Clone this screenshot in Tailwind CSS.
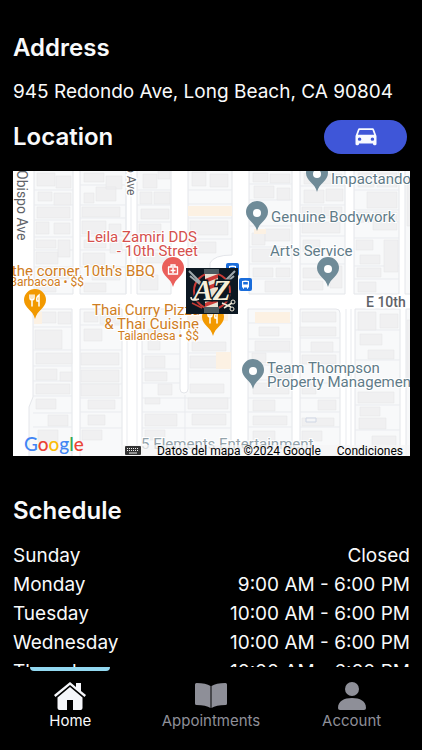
<!DOCTYPE html>
<html lang="en">
<head>
  <meta charset="UTF-8">
  <meta name="viewport" content="width=device-width, initial-scale=1">
  <title>Shop info</title>
  <script src="https://cdn.jsdelivr.net/npm/@tailwindcss/browser@4"></script>
</head>
<body class="bg-black text-gray-50 font-['Inter',sans-serif] h-screen flex flex-col">

  <main class="flex-1 min-h-0 overflow-y-auto [scrollbar-width:none] pl-[13px] pr-3 pt-8">
    <!-- Address -->
    <h2 class="text-2xl leading-8 font-semibold">Address</h2>
    <p class="mt-3 text-[19px] leading-8 whitespace-nowrap">945 Redondo Ave, Long Beach, CA 90804</p>

    <!-- Location -->
    <div class="mt-3 flex items-center justify-between pr-[3px]">
      <h2 class="text-2xl leading-8 font-semibold">Location</h2>
      <button type="button" aria-label="Directions" class="w-[83px] h-[34px] rounded-full bg-[#3f56d8] flex items-center justify-center">
        <svg class="w-7 h-[26px]" viewBox="0 0 24 24" preserveAspectRatio="none" fill="#f8faff"><path d="M18.920 5C18.720 4.400 18.160 4 17.500 4h-11c-.66 0-1.210.4-1.420 1L3 11v7.500c0 .55.45 1 1 1h1c.55 0 1-.45 1-1V18h12v.5c0 .55.45 1 1 1h1c.55 0 1-.45 1-1V11l-2.080-6zM6.500 15.500a1.500 1.500 0 1 1 0-3 1.500 1.500 0 0 1 0 3zm11 0a1.500 1.500 0 1 1 0-3 1.500 1.500 0 0 1 0 3zM5 10l1.500-4.500h11L19 10H5z"/></svg>
      </button>
    </div>

    <!-- Map -->
    <div class="relative mt-[17px] h-[285px] overflow-hidden bg-white">
      <svg class="w-full h-full" viewBox="13 171 397 285" preserveAspectRatio="xMidYMid slice" font-family="Roboto, sans-serif">
        <defs>
          <path id="pin" d="M0 0C-2-9-11-11-11-19A11 11 0 0 1 11-19C11-11 2-9 0 0Z"/>
          <g id="fork" fill="none" stroke="#fff" stroke-width="1.500" stroke-linecap="round">
            <path d="M-5-5v3q0 2 2 2t2-2v-3M-3-5V6M4 6V-5q-3 2-2 6h2"/>
          </g>
          <g id="bus">
            <rect width="13" height="13" rx="2" fill="#1a6ddb"/>
            <path d="M3 3q3.500-1 7 0v6.500h-1v1.200H8V9.500H5v1.200H4V9.500H3z" fill="#fff"/>
            <path d="M4.200 4h4.600v2.500H4.200z" fill="#1a6ddb"/>
          </g>
        </defs>
        <rect x="13" y="171" width="397" height="285" fill="#fff"/>

        <!-- blocks -->
        <path fill="#f8f9fa" stroke="#e4e6ea" d="M34 165h39v129H34zM80 165h46v129H80zM137 165h34v129h-34zM188 165h44v90q-18 0-22 8v31h-22zM249 165h43v129h-43zM300 165h45v129h-45zM354 165h45v129h-45zM405 165h10v129h-10z
          M33 309h39v160H29v-62l4-10zM80 309h42v160H80zM142 309h38v80q0 4 4 4t4-4v-80h43v160h-89zM248 309h44v160h-44zM300 309h36q4 0 4 4v156h-40zM355 309h45v160h-45zM406 309h10v160h-10z"/>
        <path fill="none" stroke="#e9ebef" d="M34 190h39M34 205h39M34 220h39M34 237h39M34 250h39M34 267h39M80 185h46M80 205h46M80 218h46M80 236h46M80 250h46M80 267h46M137 190h34M137 205h34M137 222h34M137 250h34M188 190h44M188 204h44M188 218h44M188 239h44
          M249 184h43M249 200h43M249 226h43M249 247h43M249 264h43M249 279h43M300 186h45M300 205h45M300 218h45M300 236h45M300 264h45M354 190h45M354 210h45M354 222h45M354 238h45M354 266h45M354 279h45
          M33 327h39M33 350h39M33 366h39M33 381h39M33 396h39M33 413h39M33 427h39M80 325h42M80 350h42M80 368h42M80 384h42M80 398h42M80 412h42M80 428h42M142 354h38M142 369h38M142 383h38M142 398h89M142 412h89M142 428h89M188 353h43M188 371h43
          M248 323h44M248 339h44M248 352h44M248 365h44M248 380h44M248 398h44M248 412h44M248 427h44M300 338h40M300 352h40M300 383h40M300 398h40M300 412h40M300 427h40M355 330h45M355 360h45M355 384h45M355 405h45M355 430h45M185 395v61M126 165v129M131 165v129M127 309v147M137 309v147M346 309v147M351 309v147"/>

        <!-- buildings -->
        <path fill="#f0f0f1" stroke="#e8e8ea" stroke-width=".6" d="M37 173h18v13H37zM56 176h15v12H56zM38 192h14v9H38zM54 193h17v12H54zM37 207h33v11H37zM36 222h13v12H36zM54 223h16v11H54zM36 240h20v8H36zM58 240h12v17H58zM36 252h22v12H36zM41 270h28v9H41zM36 283h20v9H36z
          M84 173h20v9H84zM106 176h16v13h-16zM96 187h20v14H96zM84 193h10v10H84zM82 207h38v10H82zM82 221h24v13H82zM109 224h12v11h-12zM84 240h22v8H84zM110 240h12v13h-12zM83 253h22v12H83zM92 270h28v10H92zM84 283h22v9H84z
          M143 174h14v14h-14zM158 171h12v8h-12zM140 192h12v12h-12zM154 192h16v12h-16zM141 209h28v10h-28zM139 224h22v11h-22zM140 253h27v10h-27zM140 275h18v15h-18z
          M192 172h14v14h-14zM210 174h18v13h-18zM190 221h38v14h-38zM192 242h24v11h-24zM253 173h15v9h-15zM270 174h20v9h-20zM254 186h20v12h-20zM277 188h13v12h-13zM265 229h25v12h-25zM252 233h13v12h-13zM252 249h28v13h-28zM253 268h20v9h-20zM276 268h14v9h-14zM265 281h26v11h-26z
          M304 173h14v11h-14zM322 174h20v10h-20zM304 190h20v13h-20zM326 189h17v12h-17zM302 207h20v9h-20zM324 207h18v9h-18zM302 222h38v11h-38zM303 240h17v12h-17zM303 268h24v10h-24zM330 266h12v22h-12zM303 281h20v9h-20z
          M358 173h16v14h-16zM377 173h20v14h-20zM367 192h30v16h-30zM358 212h12v10h-12zM373 212h24v18h-24zM356 240h17v10h-17zM384 240h14v32h-14zM360 255h20v9h-20zM357 268h24v9h-24zM358 282h18v10h-18z
          M40 312h16v11H40zM58 312h13v12H58zM35 330h27v19H35zM36 353h36v11H36zM36 369h21v11H36zM60 372h12v9H60zM36 384h34v10H36zM36 399h20v10H36zM48 415h20v11H48zM38 430h20v12H38z
          M84 312h14v10H84zM100 314h20v10h-20zM84 329h18v12H84zM81 353h38v12H81zM81 370h38v12H81zM81 384h38v12H81zM88 400h27v9H88zM88 415h17v10H88zM82 430h20v10H82z
          M148 329h12v21h-12zM145 356h20v12h-20zM145 372h22v9h-22zM158 384h14v11h-14zM145 398h15v6h-15zM145 414h32v12h-32zM145 430h20v10h-20zM192 342h34v9h-34zM190 356h40v12h-40zM190 384h34v9h-34zM188 398h40v11h-40zM192 414h34v11h-34z
          M259 327h20v9h-20zM255 341h35v10h-35zM252 353h14v10h-14zM270 368h20v10h-20zM253 383h36v11h-36zM253 400h22v11h-22zM253 416h34v9h-34zM253 431h22v10h-22zM302 312h34v10h-34zM300 327h36v9h-36zM311 342h22v10h-22zM302 355h34v9h-34zM302 384h14v10h-14zM318 400h18v10h-18zM302 418h32v8h-32zM302 431h20v10h-20z
          M358 312h18v18h-18zM380 314h18v14h-18zM360 334h22v11h-22zM368 350h26v9h-26zM358 392h36v11h-36zM360 407h20v9h-20zM359 418h27v11h-27zM372 436h24v11h-24zM407 176h6v50h-6zM407 320h6v60h-6z"/>
        <path fill="#fcf1e3" d="M188 206h44v10h-44zM254 229h12v5h-12zM255 312h35v11h-35zM34 312h8v12h-8zM216 352h15v17h-15zM188 313h40v8h-40z"/>
        <path fill="#f4f5f7" stroke="#cfd6e4" d="M306 418h10v4h-10z"/>

        <!-- street names -->
        <g fill="#5f6368" stroke="#fff" stroke-width="3" paint-order="stroke">
          <text transform="translate(17 170) rotate(90)" font-size="14">Obispo Ave</text>
          <text transform="translate(127 166) rotate(90)" font-size="12">o Ave</text>
          <text x="366" y="307" font-size="14" font-weight="500">E 10th</text>
        </g>

        <!-- place labels -->
        <g stroke="#fff" stroke-width="2" paint-order="stroke" font-size="15">
          <g fill="#5f7b88">
            <text x="331" y="184">Impactando</text>
            <text x="271" y="222">Genuine Bodywork</text>
            <text x="270" y="256">Art's Service</text>
            <text x="267" y="373">Team Thompson</text>
            <text x="267" y="387">Property Management</text>
            <text x="141" y="449" fill="#93a3ab">5 Elements Entertainment</text>
          </g>
          <g fill="#d5504d" text-anchor="end">
            <text x="197" y="242">Leila Zamiri DDS</text>
            <text x="198" y="256">- 10th Street</text>
          </g>
          <g fill="#cf7d23">
            <text x="155" y="276" text-anchor="end">the corner 10th's BBQ</text>
            <text x="84" y="286" text-anchor="end" font-size="12">Barbacoa • $$</text>
            <text x="92" y="315">Thai Curry Pizza</text>
            <text x="199" y="329" text-anchor="end">&amp; Thai Cuisine</text>
            <text x="199" y="340" text-anchor="end" font-size="12">Tailandesa • $$</text>
          </g>
        </g>

        <!-- pins -->
        <g fill="#6f8b98">
          <use href="#pin" x="317" y="192"/>
          <use href="#pin" x="257" y="231"/>
          <use href="#pin" x="328" y="287"/>
          <use href="#pin" x="253" y="389"/>
        </g>
        <g fill="#fff">
          <circle cx="317" cy="174" r="4"/>
          <circle cx="257" cy="213" r="4"/>
          <circle cx="328" cy="269" r="4"/>
          <circle cx="253" cy="371" r="4"/>
        </g>
        <use href="#pin" x="173" y="287" fill="#ea5f5b"/>
        <path d="M168 267h10M168.500 267v7h9v-7M171 267v-2h4v2" fill="none" stroke="#fff" stroke-width="1.300"/>
        <path d="M173 268v5M170.500 270.500h5" stroke="#fff" stroke-width="1.500"/>
        <use href="#pin" x="35" y="319" fill="#f29900"/>
        <use href="#fork" x="35" y="300"/>
        <use href="#pin" x="213" y="336" fill="#f29900"/>
        <use href="#fork" x="213" y="317"/>
        <use href="#bus" x="226" y="263"/>
        <use href="#bus" x="239" y="278"/>

        <!-- shop logo -->
        <rect x="186" y="268" width="52" height="46" fill="#0c1822"/>
        <circle cx="212" cy="291" r="18" fill="none" stroke="#c73a35" stroke-width="2"/>
        <path d="M189 271l14 14M190 276l11 9M235 271l-14 14M234 276l-11 9" stroke="#9fa9ad" stroke-width="2"/>
        <rect x="205" y="272" width="13" height="37" fill="#e9e2d3"/>
        <path d="M205 279l13-5v4l-13 5zM205 287l13-5v4l-13 5zM205 303l13-5v4l-13 5z" fill="#cc3b38"/>
        <path d="M204 269h15v5h-15zM204 307h15v6h-15z" fill="#4d5a60"/>
        <text x="212" y="300" text-anchor="middle" font-family="'Liberation Serif', serif" font-size="29" font-weight="700" font-style="italic" fill="#f6efd9" stroke="#0c1822" stroke-width="3" paint-order="stroke">AZ</text>
        <path d="M191 297q0 5 8 2M222 303l9 4M224 308l8-5" fill="none" stroke="#f0ead8" stroke-width="1.500"/>
        <path d="M192 303l10 5" stroke="#c73a35" stroke-width="1.500"/>
        <circle cx="232" cy="309" r="2" fill="none" stroke="#f0ead8"/>
        <circle cx="233" cy="302" r="2" fill="none" stroke="#f0ead8"/>
      </svg>

      <!-- Attribution over the map -->
      <div class="absolute inset-x-0 bottom-0 flex items-end justify-between pl-[11px] text-black">
        <div class="font-['Lato',sans-serif] font-medium text-[19px] leading-6" aria-label="Google"><span class="text-[#4285f4]">G</span><span class="text-[#ea4335]">o</span><span class="text-[#fbbc05]">o</span><span class="text-[#4285f4]">g</span><span class="text-[#34a853]">l</span><span class="text-[#ea4335]">e</span></div>
        <div class="flex items-center h-[11px] pl-1 pr-[7px] bg-[#f5f5f5]/70 font-['Roboto',sans-serif] text-[12px] leading-3 whitespace-nowrap">
          <svg class="w-4 h-2.5 mr-4" viewBox="0 0 16 10"><rect width="16" height="9" rx="1" fill="#333"/><path d="M2 2.500h12M2 4.500h12" stroke="#eee" stroke-dasharray="1 1"/><path d="M4 7h8" stroke="#eee"/></svg>
          <span>Datos del mapa ©2024 Google</span>
          <a href="#" class="ml-4">Condiciones</a>
        </div>
      </div>
    </div>

    <!-- Schedule -->
    <h2 class="mt-[39px] text-2xl leading-8 font-semibold">Schedule</h2>
    <table class="mt-[14px] w-full text-[19px] leading-[29px]">
      <tbody>
        <tr><th scope="row" class="p-0 text-left font-normal">Sunday</th><td class="p-0 text-right">Closed</td></tr>
        <tr><th scope="row" class="p-0 text-left font-normal">Monday</th><td class="p-0 text-right">9:00 AM - 6:00 PM</td></tr>
        <tr><th scope="row" class="p-0 text-left font-normal">Tuesday</th><td class="p-0 text-right">10:00 AM - 6:00 PM</td></tr>
        <tr><th scope="row" class="p-0 text-left font-normal">Wednesday</th><td class="p-0 text-right">10:00 AM - 6:00 PM</td></tr>
        <tr><th scope="row" class="p-0 text-left font-normal">Thursday</th><td class="p-0 text-right">10:00 AM - 6:00 PM</td></tr>
      </tbody>
    </table>
  </main>

  <!-- Bottom tabs -->
  <nav class="h-[83px] grid grid-cols-3 bg-black text-[#8e8f98] text-[15px] leading-[22px]">
    <a href="#" aria-current="page" class="flex flex-col items-center text-gray-50">
      <span class="w-20 h-1 rounded-b bg-[#92d8f0]"></span>
      <svg class="mt-[11px] w-8 h-7" viewBox="0 0 32 28" fill="#f5f6fa"><path d="M16 0L0 13l1.500 2L16 3l14.500 12L32 13l-5-4V1h-5v4z"/><path d="M16 5L3.500 15.500V26q0 2 2 2H13V18h6v10h7.500q2 0 2-2V15.500z"/></svg>
      <span>Home</span>
    </a>
    <a href="#" class="flex flex-col items-center pt-[15px]">
      <svg class="w-8 h-7" viewBox="0 0 32 28" fill="currentColor"><path d="M15.500 4Q11 1 1.500 1 0 1 0 2.500v19Q0 23 1.500 23q9.500 0 14 3zM16.500 4Q21 1 30.500 1 32 1 32 2.500v19q0 1.500-1.500 1.500-9.500 0-14 3z"/></svg>
      <span>Appointments</span>
    </a>
    <a href="#" class="flex flex-col items-center pt-[15px]">
      <svg class="w-8 h-7" viewBox="0 0 32 28" fill="currentColor"><circle cx="16" cy="7" r="7"/><path d="M4 28q-2 0-2-2C2 19 8 16 16 16s14 3 14 10q0 2-2 2z"/></svg>
      <span>Account</span>
    </a>
  </nav>

</body>
</html>
